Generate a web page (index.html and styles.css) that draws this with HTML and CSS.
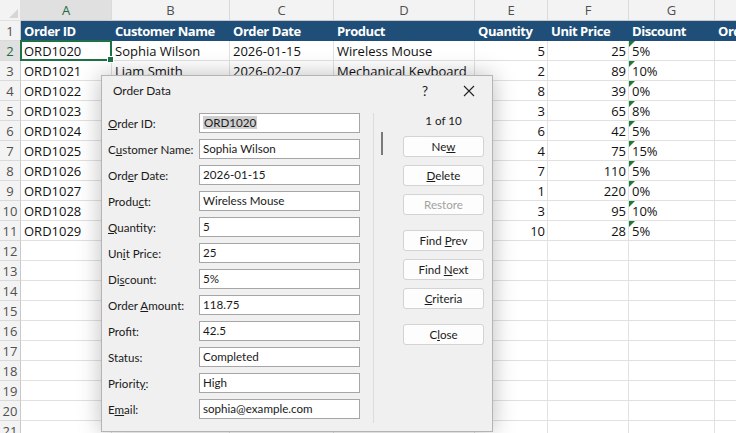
FILE: index.html
```html
<!DOCTYPE html>
<html>
<head>
<meta charset="utf-8">
<link rel="stylesheet" href="styles.css">
</head>
<body>
<div class="sheet">
  <div class="corner"></div><div class="ch sel-col">A</div><div class="ch">B</div><div class="ch">C</div><div class="ch">D</div><div class="ch">E</div><div class="ch">F</div><div class="ch">G</div><div class="ch">H</div>

  <div class="rh">1</div><div class="th">Order ID</div><div class="th">Customer Name</div><div class="th">Order Date</div><div class="th">Product</div><div class="th">Quantity</div><div class="th">Unit Price</div><div class="th">Discount</div><div class="th">Order Amount</div>

  <div class="rh sel-row">2</div><div class="c active">ORD1020<span class="handle"></span></div><div class="c">Sophia Wilson</div><div class="c">2026-01-15</div><div class="c">Wireless Mouse</div><div class="c n">5</div><div class="c n">25</div><div class="c flag">5%</div><div class="c"></div>
  <div class="rh">3</div><div class="c">ORD1021</div><div class="c">Liam Smith</div><div class="c">2026-02-07</div><div class="c">Mechanical Keyboard</div><div class="c n">2</div><div class="c n">89</div><div class="c flag">10%</div><div class="c"></div>
  <div class="rh">4</div><div class="c">ORD1022</div><div class="c"></div><div class="c"></div><div class="c"></div><div class="c n">8</div><div class="c n">39</div><div class="c flag">0%</div><div class="c"></div>
  <div class="rh">5</div><div class="c">ORD1023</div><div class="c"></div><div class="c"></div><div class="c"></div><div class="c n">3</div><div class="c n">65</div><div class="c flag">8%</div><div class="c"></div>
  <div class="rh">6</div><div class="c">ORD1024</div><div class="c"></div><div class="c"></div><div class="c"></div><div class="c n">6</div><div class="c n">42</div><div class="c flag">5%</div><div class="c"></div>
  <div class="rh">7</div><div class="c">ORD1025</div><div class="c"></div><div class="c"></div><div class="c"></div><div class="c n">4</div><div class="c n">75</div><div class="c flag">15%</div><div class="c"></div>
  <div class="rh">8</div><div class="c">ORD1026</div><div class="c"></div><div class="c"></div><div class="c"></div><div class="c n">7</div><div class="c n">110</div><div class="c flag">5%</div><div class="c"></div>
  <div class="rh">9</div><div class="c">ORD1027</div><div class="c"></div><div class="c"></div><div class="c"></div><div class="c n">1</div><div class="c n">220</div><div class="c flag">0%</div><div class="c"></div>
  <div class="rh">10</div><div class="c">ORD1028</div><div class="c"></div><div class="c"></div><div class="c"></div><div class="c n">3</div><div class="c n">95</div><div class="c flag">10%</div><div class="c"></div>
  <div class="rh">11</div><div class="c">ORD1029</div><div class="c"></div><div class="c"></div><div class="c"></div><div class="c n">10</div><div class="c n">28</div><div class="c flag">5%</div><div class="c"></div>
  <div class="rh">12</div><div class="c"></div><div class="c"></div><div class="c"></div><div class="c"></div><div class="c"></div><div class="c"></div><div class="c"></div><div class="c"></div>
  <div class="rh">13</div><div class="c"></div><div class="c"></div><div class="c"></div><div class="c"></div><div class="c"></div><div class="c"></div><div class="c"></div><div class="c"></div>
  <div class="rh">14</div><div class="c"></div><div class="c"></div><div class="c"></div><div class="c"></div><div class="c"></div><div class="c"></div><div class="c"></div><div class="c"></div>
  <div class="rh">15</div><div class="c"></div><div class="c"></div><div class="c"></div><div class="c"></div><div class="c"></div><div class="c"></div><div class="c"></div><div class="c"></div>
  <div class="rh">16</div><div class="c"></div><div class="c"></div><div class="c"></div><div class="c"></div><div class="c"></div><div class="c"></div><div class="c"></div><div class="c"></div>
  <div class="rh">17</div><div class="c"></div><div class="c"></div><div class="c"></div><div class="c"></div><div class="c"></div><div class="c"></div><div class="c"></div><div class="c"></div>
  <div class="rh">18</div><div class="c"></div><div class="c"></div><div class="c"></div><div class="c"></div><div class="c"></div><div class="c"></div><div class="c"></div><div class="c"></div>
  <div class="rh">19</div><div class="c"></div><div class="c"></div><div class="c"></div><div class="c"></div><div class="c"></div><div class="c"></div><div class="c"></div><div class="c"></div>
  <div class="rh">20</div><div class="c"></div><div class="c"></div><div class="c"></div><div class="c"></div><div class="c"></div><div class="c"></div><div class="c"></div><div class="c"></div>
  <div class="rh">21</div><div class="c"></div><div class="c"></div><div class="c"></div><div class="c"></div><div class="c"></div><div class="c"></div><div class="c"></div><div class="c"></div>
</div>

<div class="dialog">
  <div class="titlebar">
    <span class="title">Order Data</span>
    <span class="help">?</span>
    <span class="close"><svg width="12" height="12" viewBox="0 0 12 12"><path d="M1 1 L11 11 M11 1 L1 11" stroke="#222" stroke-width="1.1" fill="none"/></svg></span>
  </div>
  <div class="dbody">
    <div class="form">
      <div class="frow"><span class="lbl"><u>O</u>rder ID:</span><div class="field"><span class="hl">ORD1020</span></div></div>
      <div class="frow"><span class="lbl">C<u>u</u>stomer Name:</span><div class="field">Sophia Wilson</div></div>
      <div class="frow"><span class="lbl">Ord<u>e</u>r Date:</span><div class="field">2026-01-15</div></div>
      <div class="frow"><span class="lbl">Produ<u>c</u>t:</span><div class="field">Wireless Mouse</div></div>
      <div class="frow"><span class="lbl"><u>Q</u>uantity:</span><div class="field">5</div></div>
      <div class="frow"><span class="lbl">Un<u>i</u>t Price:</span><div class="field">25</div></div>
      <div class="frow"><span class="lbl">Di<u>s</u>count:</span><div class="field">5%</div></div>
      <div class="frow"><span class="lbl">Order <u>A</u>mount:</span><div class="field">118.75</div></div>
      <div class="frow"><span class="lbl">Profit:</span><div class="field">42.5</div></div>
      <div class="frow"><span class="lbl">Status:</span><div class="field">Completed</div></div>
      <div class="frow"><span class="lbl">Priorit<u>y</u>:</span><div class="field">High</div></div>
      <div class="frow"><span class="lbl">E<u>m</u>ail:</span><div class="field">sophia@example.com</div></div>
    </div>
    <div class="pane">
      <div class="thumb"></div>
      <div class="btns">
        <div class="count">1 of 10</div>
        <div class="btn">Ne<u>w</u></div>
        <div class="btn"><u>D</u>elete</div>
        <div class="btn disabled">Restore</div>
        <div class="btn group">Find <u>P</u>rev</div>
        <div class="btn">Find <u>N</u>ext</div>
        <div class="btn"><u>C</u>riteria</div>
        <div class="btn group">C<u>l</u>ose</div>
      </div>
    </div>
  </div>
</div>
</body>
</html>
```

FILE: styles.css
```css
html, body {
  margin: 0;
  padding: 0;
  background: #ffffff;
  overflow: hidden;
  width: 736px;
  height: 433px;
}

.sheet {
  display: grid;
  grid-template-columns: 21px 91px 118px 104px 141px 73px 81px 86px 120px;
  grid-template-rows: 21px;
  grid-auto-rows: 20px;
  width: max-content;
  font-family: "Open Sans", "Liberation Sans", sans-serif;
  font-size: 13px;
  color: #111;
}

.sheet > div {
  box-sizing: border-box;
  border-right: 1px solid #e1e1e1;
  border-bottom: 1px solid #e1e1e1;
  white-space: nowrap;
  overflow: hidden;
  line-height: 20px;
}

.corner {
  background: #f3f3f3;
  position: relative;
}
.corner::after {
  content: "";
  position: absolute;
  right: 2px;
  bottom: 2px;
  border-left: 9px solid transparent;
  border-bottom: 9px solid #d6d6d6;
}

.sheet > .ch {
  background: #f3f3f3;
  color: #505050;
  text-align: center;
  font-size: 13px;
  line-height: 20px;
  border-right-color: #dadada;
  border-bottom-color: #c9c9c9;
}
.sheet > .ch.sel-col {
  background: #e0e0e0;
  color: #1e6b41;
}

.sheet > .rh {
  background: #f3f3f3;
  color: #505050;
  text-align: center;
  font-size: 13px;
  border-right-color: #c9c9c9;
  border-bottom-color: #dadada;
}
.sheet > .rh.sel-row {
  background: #e0e0e0;
  color: #1e6b41;
}

.sheet > .th {
  background: #1f4e78;
  color: #ffffff;
  font-weight: 700;
  letter-spacing: -0.45px;
  padding-left: 3px;
  border-right-color: #1f4e78;
  border-bottom-color: #1f4e78;
}

.sheet > .c {
  padding: 0 2px 0 3px;
}
.sheet > .c.n {
  text-align: right;
}
.sheet > .c.flag {
  position: relative;
}
.sheet > .c.flag::before {
  content: "";
  position: absolute;
  left: 0;
  top: 0;
  border-top: 6px solid #1e7b36;
  border-right: 6px solid transparent;
}

.sheet > .c.active {
  position: relative;
  overflow: visible;
}
.sheet > .c.active::after {
  content: "";
  position: absolute;
  left: -1px;
  top: -1px;
  right: -1px;
  bottom: -1px;
  border: 2px solid #1e7145;
  pointer-events: none;
}
.handle {
  position: absolute;
  right: -3px;
  bottom: -3px;
  width: 5px;
  height: 5px;
  background: #1e7145;
  border: 1px solid #ffffff;
  z-index: 2;
}

/* Dialog */
.dialog {
  position: absolute;
  left: 101px;
  top: 75px;
  width: 392px;
  height: 357px;
  box-sizing: border-box;
  background: #f0f0f0;
  border: 1px solid #b4b4b4;
  box-shadow: 0 0 22px rgba(0, 0, 0, 0.26);
  font-family: Lato, "Open Sans", sans-serif;
  font-size: 11.6px;
  color: #1a1a1a;
  display: flex;
  flex-direction: column;
}

.titlebar {
  height: 29px;
  display: flex;
  align-items: center;
  padding-left: 11px;
  padding-right: 13px;
}
.title {
  flex: 1;
  font-size: 11.8px;
}
.help {
  width: 20px;
  text-align: center;
  font-size: 13.5px;
  margin-right: 24px;
}
.close {
  width: 20px;
  display: flex;
  justify-content: center;
  align-items: center;
}

.dbody {
  flex: 1;
  display: flex;
}

.form {
  padding-top: 8px;
  padding-left: 6px;
  display: flex;
  flex-direction: column;
  gap: 6px;
}
.frow {
  display: flex;
  align-items: center;
  height: 20px;
}
.lbl {
  width: 91px;
  white-space: nowrap;
}
.field {
  box-sizing: border-box;
  width: 161px;
  height: 20px;
  background: #ffffff;
  border: 1px solid #a6a6a6;
  padding-left: 3px;
  line-height: 18px;
  white-space: nowrap;
}
.hl {
  background: #cfcfcf;
  padding: 0 1px;
}

.pane {
  margin-left: 13px;
  margin-top: 8px;
  margin-bottom: 8px;
  border-left: 1px solid #dcdcdc;
  display: flex;
}
.thumb {
  margin-left: 7px;
  margin-top: 19px;
  width: 2px;
  height: 23px;
  background: #7a7a7a;
}
.btns {
  margin-left: 20px;
  width: 81px;
  display: flex;
  flex-direction: column;
}
.count {
  line-height: 16px;
  height: 16px;
  text-align: center;
  margin-bottom: 7px;
}
.btn {
  box-sizing: border-box;
  height: 21px;
  margin-bottom: 8px;
  background: #fdfdfd;
  border: 1px solid #d3d3d3;
  border-radius: 3px;
  text-align: center;
  line-height: 19px;
}
.btn.group {
  margin-top: 7px;
}
.btn.disabled {
  color: #a2a2a2;
}
```
